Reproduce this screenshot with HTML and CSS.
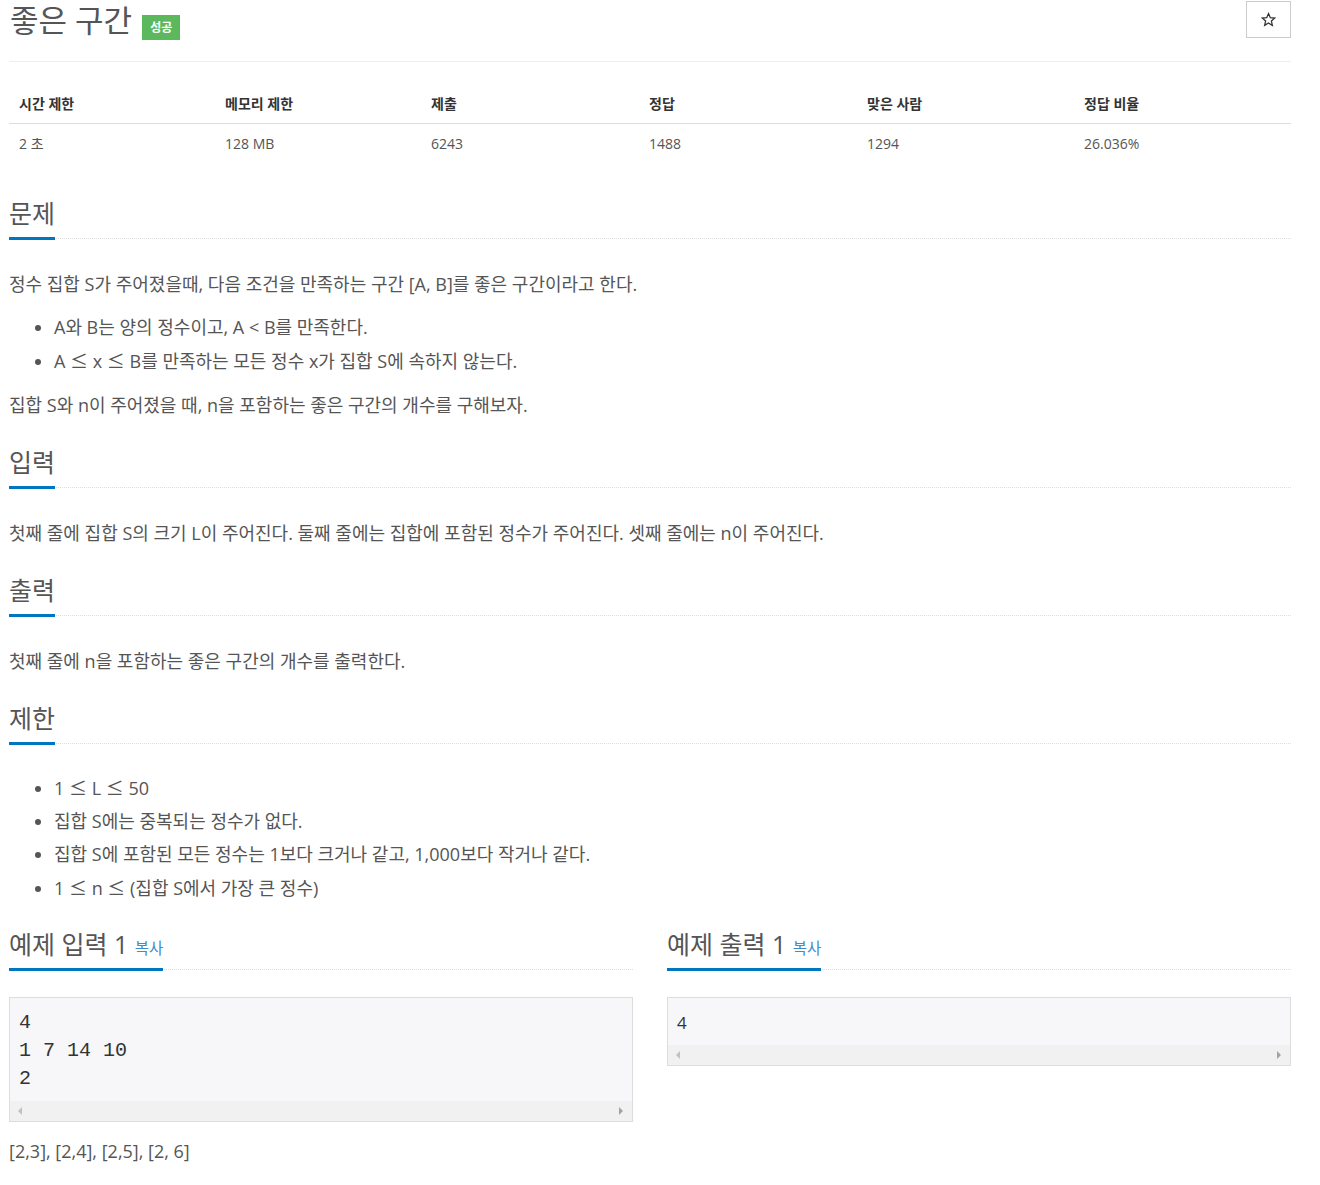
FILE: index.html
```html
<!DOCTYPE html>
<html lang="ko">
<head>
<meta charset="utf-8">
<title>좋은 구간</title>
<link rel="stylesheet" href="styles.css">
</head>
<body>
<div class="page">
  <div class="title-row">
    <h1 class="title"><span class="title-text">좋은 구간</span><span class="badge">성공</span></h1>
    <button class="star-btn" type="button" aria-label="즐겨찾기">
      <svg width="15" height="15" viewBox="0 0 24 24"><path d="M12 2.5l2.9 6.6 7.1.6-5.4 4.7 1.6 7-6.2-3.7-6.2 3.7 1.6-7L2 9.7l7.1-.6z" fill="none" stroke="#333" stroke-width="2" stroke-linejoin="miter"/></svg>
    </button>
  </div>
  <div class="rule"></div>

  <table class="info">
    <thead>
      <tr>
        <th class="c1">시간 제한</th>
        <th class="c2">메모리 제한</th>
        <th class="c3">제출</th>
        <th class="c4">정답</th>
        <th class="c5">맞은 사람</th>
        <th class="c6">정답 비율</th>
      </tr>
    </thead>
    <tbody>
      <tr>
        <td>2 초</td>
        <td>128 MB</td>
        <td>6243</td>
        <td>1488</td>
        <td>1294</td>
        <td>26.036%</td>
      </tr>
    </tbody>
  </table>

  <section class="sec">
    <h2 class="head"><span class="head-text">문제</span></h2>
    <div class="body">
      <p>정수 집합 S가 주어졌을때, 다음 조건을 만족하는 구간 [A, B]를 좋은 구간이라고 한다.</p>
      <ul>
        <li>A와 B는 양의 정수이고, A &lt; B를 만족한다.</li>
        <li>A <span class="sym">≤</span> x <span class="sym">≤</span> B를 만족하는 모든 정수 x가 집합 S에 속하지 않는다.</li>
      </ul>
      <p>집합 S와 n이 주어졌을 때, n을 포함하는 좋은 구간의 개수를 구해보자.</p>
    </div>
  </section>

  <section class="sec">
    <h2 class="head"><span class="head-text">입력</span></h2>
    <div class="body">
      <p>첫째 줄에 집합 S의 크기 L이 주어진다. 둘째 줄에는 집합에 포함된 정수가 주어진다. 셋째 줄에는 n이 주어진다.</p>
    </div>
  </section>

  <section class="sec">
    <h2 class="head"><span class="head-text">출력</span></h2>
    <div class="body">
      <p>첫째 줄에 n을 포함하는 좋은 구간의 개수를 출력한다.</p>
    </div>
  </section>

  <section class="sec">
    <h2 class="head"><span class="head-text">제한</span></h2>
    <div class="body body-list">
      <ul>
        <li>1 <span class="sym">≤</span> L <span class="sym">≤</span> 50</li>
        <li>집합 S에는 중복되는 정수가 없다.</li>
        <li>집합 S에 포함된 모든 정수는 1보다 크거나 같고, 1,000보다 작거나 같다.</li>
        <li>1 <span class="sym">≤</span> n <span class="sym">≤</span> (집합 S에서 가장 큰 정수)</li>
      </ul>
    </div>
  </section>

  <div class="samples">
    <section class="sample">
      <h2 class="head"><span class="head-text">예제 입력 1 <a class="copy" href="#">복사</a></span></h2>
      <div class="pre-box">
        <pre class="code mono">4
1 7 14 10
2</pre>
        <div class="hscroll"><span class="arrow left"></span><span class="arrow right"></span></div>
      </div>
    </section>
    <section class="sample">
      <h2 class="head"><span class="head-text">예제 출력 1 <a class="copy" href="#">복사</a></span></h2>
      <div class="pre-box">
        <pre class="code sans">4</pre>
        <div class="hscroll"><span class="arrow left"></span><span class="arrow right"></span></div>
      </div>
    </section>
  </div>
  <p class="hint">[2,3], [2,4], [2,5], [2, 6]</p>
</div>
</body>
</html>
```

FILE: styles.css
```css
html, body {
  margin: 0;
  padding: 0;
  background: #fff;
}
body {
  font-family: "Open Sans", "Noto Sans CJK KR", sans-serif;
  color: #555;
  font-size: 14px;
}
.page {
  width: 1282px;
  margin-left: 9px;
}
.title-row {
  display: flex;
  justify-content: space-between;
  align-items: flex-start;
  height: 61px;
}
.title {
  margin: 0;
  font-weight: 400;
  font-size: 31px;
  line-height: 40px;
  color: #555;
  display: flex;
  align-items: flex-start;
}
.title-text {
  margin-left: 1px;
}
.badge {
  display: inline-block;
  background: #5cb85c;
  color: #fff;
  font-size: 12px;
  font-weight: 700;
  line-height: 25px;
  height: 25px;
  padding: 0 8px;
  margin-left: 10px;
  margin-top: 15px;
}
.star-btn {
  margin-top: 1px;
  width: 45px;
  height: 37px;
  border: 1px solid #ccc;
  background: #fff;
  padding: 0;
  display: flex;
  align-items: center;
  justify-content: center;
}
.rule {
  height: 1px;
  background: #eee;
}
.info {
  width: 100%;
  border-collapse: collapse;
  table-layout: fixed;
  margin-top: 24px;
}
.info th, .info td {
  text-align: left;
  padding: 8px 10px;
  line-height: 21px;
  font-size: 14px;
}
.info th {
  color: #333;
  font-weight: 700;
  border-bottom: 1px solid #ddd;
  padding-top: 7px;
  padding-bottom: 9px;
}
.info td {
  color: #555;
  padding-top: 9px;
}
.info .c1 { width: 186px; }
.info .c2 { width: 186px; }
.info .c3 { width: 198px; }
.info .c4 { width: 198px; }
.info .c5 { width: 197px; }

.sec {
  display: flow-root;
  margin-bottom: 17px;
}
.info + .sec {
  margin-top: 38px;
}
.head {
  margin: 0;
  font-size: 25px;
  font-weight: 400;
  line-height: 26px;
  color: #555;
  border-bottom: 1px dotted #ddd;
}
.head-text {
  display: inline-block;
  padding-bottom: 11px;
  border-bottom: 3px solid #0076c0;
  margin-bottom: -2px;
}
.copy {
  font-size: 15.5px;
  line-height: 1;
  color: #428bca;
  text-decoration: none;
}
.body {
  margin-top: 30px;
  font-size: 18px;
}
.body p {
  margin: 0 0 12px;
  line-height: 30px;
}
.body ul {
  margin: 0 0 12px;
  padding-left: 45px;
}
.body li {
  line-height: 33px;
}
.sym {
  font-family: "Noto Sans CJK KR", sans-serif;
}
.body-list {
  margin-top: 27px;
}
.samples {
  display: grid;
  grid-template-columns: 1fr 1fr;
  column-gap: 34px;
  margin-top: -3px;
}
.pre-box {
  margin-top: 27px;
  border: 1px solid #ddd;
  background: #f7f7f9;
}
.code {
  margin: 0;
  padding: 11px 9px 8px;
  line-height: 28px;
  color: #333;
  overflow: hidden;
}
.code.mono {
  font-family: "Liberation Mono", monospace;
  font-size: 20px;
}
.code.sans {
  font-family: "Open Sans", sans-serif;
  font-size: 17px;
}
.hscroll {
  height: 20px;
  background: #f1f1f1;
  display: flex;
  justify-content: space-between;
  align-items: center;
  padding: 0 9px 0 8px;
}
.arrow {
  width: 0;
  height: 0;
  border-top: 4px solid transparent;
  border-bottom: 4px solid transparent;
}
.arrow.left {
  border-right: 4px solid #c1c1c1;
}
.arrow.right {
  border-left: 4px solid #a3a3a3;
}
.hint {
  margin: 14px 0 0;
  font-size: 18px;
  line-height: 30px;
}
```
